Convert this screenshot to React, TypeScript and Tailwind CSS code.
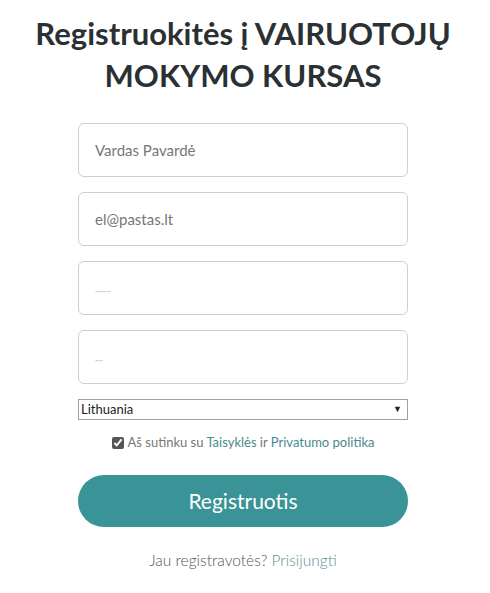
export default function App() {
  return (
    <div className="min-h-screen bg-white font-['Lato',sans-serif] text-[#333]">
      <main className="mx-auto flex w-[330px] -translate-x-[2px] flex-col items-stretch pt-[12px]">
        <h1 className="-mx-[80px] text-center text-[31px] font-bold leading-[42px] text-[#2b3033]">
          Registruokitės į VAIRUOTOJŲ MOKYMO KURSAS
        </h1>

        <form className="mt-[27px] flex flex-col gap-[15px]">
          <Field placeholder="Vardas Pavardė" />
          <Field placeholder="el@pastas.lt" />
          <Field placeholder="······" dots />
          <Field placeholder="···" dots />
        </form>

        <div className="relative mt-[15px] h-[21px]">
          <select className="block h-[21px] w-full appearance-none border border-[#a0a0a0] bg-white px-[2px] text-[13px] text-[#222] outline-none">
            <option>Lithuania</option>
          </select>
          <span className="pointer-events-none absolute right-[6px] top-[4px] text-[9px] leading-[12px] text-[#222]">▼</span>
        </div>

        <label className="mt-[13px] flex items-center justify-center gap-[4px] text-[13px] text-[#777]">
          <input type="checkbox" defaultChecked className="h-[12px] w-[12px] accent-[#555]" />
          <span>
            Aš sutinku su <span className="text-[#4a8a8e]">Taisyklės</span> ir{" "}
            <span className="text-[#4a8a8e]">Privatumo politika</span>
          </span>
        </label>

        <button
          type="button"
          className="mt-[22px] h-[52px] w-full rounded-full bg-[#3a9396] text-[21px] text-white"
        >
          Registruotis
        </button>

        <p className="mt-[22px] text-center text-[15.5px] font-light text-[#555]">
          Jau registravotės? <span className="text-[#5b8f93]">Prisijungti</span>
        </p>
      </main>
    </div>
  );
}

function Field({ placeholder, dots }: { placeholder: string; dots?: boolean }) {
  return (
    <input
      placeholder={placeholder}
      className={`h-[54px] w-full rounded-[6px] border border-[#cfcfcf] px-[16px] text-[15px] text-[#555] outline-none ${
        dots ? "placeholder:text-[#bbb] placeholder:text-[10px]" : "placeholder:text-[#777]"
      }`}
    />
  );
}
